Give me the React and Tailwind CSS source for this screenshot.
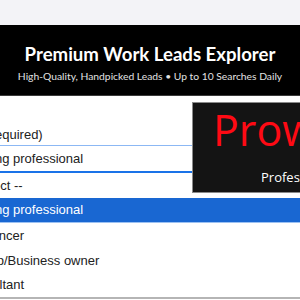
export default function App() {
  const options = [
    { label: '-- Select --', h: 'h-[25px]' },
    { label: 'Working professional', h: 'h-[25px]', selected: true },
    { label: 'Freelancer', h: 'h-[25px]' },
    { label: 'Startup/Business owner', h: 'h-[25px]' },
    { label: 'Consultant', h: 'h-[24px]' },
  ];

  return (
    <div className="relative w-[300px] h-[300px] overflow-hidden bg-white">
      {/* top band */}
      <div className="h-[25px] bg-[#f3f3f7]" />

      {/* header */}
      <div className="h-[71px] bg-black border-b border-[#3a3a3a] flex flex-col items-center pt-[17px] font-['Lato',sans-serif]">
        <h1 className="text-[18.6px] leading-[24px] font-bold text-white whitespace-nowrap">
          Premium Work Leads Explorer
        </h1>
        <p className="mt-[3px] text-[10.3px] leading-[14px] text-[#e2e2e2] whitespace-nowrap">
          High-Quality, Handpicked Leads • Up to 10 Searches Daily
        </p>
      </div>

      {/* form */}
      <div className="-ml-[38px] w-[400px] font-['Liberation_Sans',Arial,sans-serif] text-[13px] text-[#222]">
        <label className="block -ml-[6px] mt-[31px] leading-[16px]">Role (required)</label>
        <div className="mt-[2px] h-[28px] border-t border-[#8cb8f4] border-b-2 border-b-[#1a73e8] flex items-center">
          <span>Working professional</span>
        </div>
        <div className="border-b-2 border-[#b5b5b5]">
          {options.map((o) => (
            <div
              key={o.label}
              className={
                o.h +
                ' flex items-center ' +
                (o.selected
                  ? 'bg-[#1967d2] text-white border-b border-[#9cc1f2]'
                  : '')
              }
            >
              {o.label}
            </div>
          ))}
        </div>
      </div>

      {/* preview overlay */}
      <div className="absolute left-[192px] top-[102px] w-[200px] h-[91px] bg-[#141414] border border-[#8a8a8a] font-['Open_Sans',sans-serif]">
        <div className="pl-[20px] pt-[1px] text-[43px] leading-[52px] text-[#ff0a14] whitespace-nowrap">
          Prowess
        </div>
        <div className="pl-[68px] mt-[13px] text-[13px] leading-[16px] text-white whitespace-nowrap">
          Professional Network
        </div>
      </div>
    </div>
  );
}
